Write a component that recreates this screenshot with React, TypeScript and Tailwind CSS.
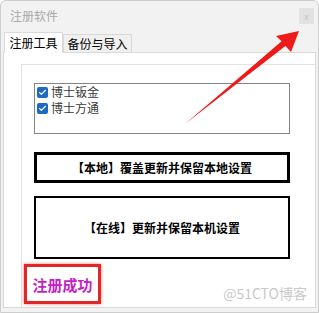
import { Check } from 'lucide-react';

const items = ['博士钣金', '博士方通'];

export default function App() {
  return (
    <div
      className="relative w-[319px] h-[313px] overflow-hidden bg-[#f2f2f2] border border-[#cdcdcd] rounded-t-[6px]"
      style={{ fontFamily: '"Noto Sans CJK SC", "Noto Sans", sans-serif' }}
    >
      {/* Title bar */}
      <div className="h-[30px] flex items-center justify-between pl-[9px] pr-[4px]">
        <span className="text-[12px] text-[#a9a9a9] leading-none">注册软件</span>
        <div className="w-[15px] h-[16px] bg-[#e2e2e2] flex items-center justify-center text-[9px] leading-none text-[#c4c4c4]">
          x
        </div>
      </div>

      {/* Tabs */}
      <div className="h-[21px] flex items-end pl-[3px]">
        <div className="w-[59px] h-[21px] bg-white border border-b-0 border-[#d9d9d9] flex items-center justify-center text-[12px] text-black leading-none relative z-10 -mb-px">
          注册工具
        </div>
        <div className="w-[69px] h-[18px] bg-[#f0f0f0] border border-b-0 border-[#d9d9d9] flex items-center justify-center text-[12px] text-black leading-none">
          备份与导入
        </div>
      </div>

      {/* Panel */}
      <div className="h-[256px] mx-[2px] bg-white border border-[#d9d9d9] pt-[11px] pl-[17px]">
        <div className="h-full border-l border-t border-[#e3e3e3] pl-[12px] pt-[18px]">
          <div className="w-[256px] h-[51px] border border-[#848484] pt-[1px] pl-[2px] flex flex-col gap-[2px]">
            {items.map((name) => (
              <div key={name} className="h-[14px] flex items-center gap-[3px]">
                <div className="w-[11px] h-[11px] rounded-[2px] bg-[#1d6ac4] flex items-center justify-center">
                  <Check className="w-[9px] h-[9px] text-white" strokeWidth={3} />
                </div>
                <span className="text-[12px] text-[#3a3a3a] leading-none">{name}</span>
              </div>
            ))}
          </div>

          <div className="mt-[18px] w-[256px] h-[31px] border-[3px] border-black flex items-center justify-center text-[12px] font-bold text-black leading-none">
            【本地】覆盖更新并保留本地设置
          </div>

          <div className="mt-[13px] w-[256px] h-[63px] border-2 border-black flex items-center justify-center text-[12px] font-bold text-black leading-none">
            【在线】更新并保留本机设置
          </div>

          <div className="mt-[5px] -ml-[10px] w-[77px] h-[40px] border-[3px] border-[#e32626] shadow-[0_0_3px_rgba(227,38,38,0.6)] flex items-center justify-center text-[15px] font-bold text-[#c41fc4] leading-none">
            注册成功
          </div>
        </div>
      </div>

      {/* Watermark */}
      <span className="absolute right-[11px] bottom-[12px] text-[14px] text-[#c9c9c9] leading-none">
        @51CTO博客
      </span>

      {/* Red arrow */}
      <svg className="absolute left-0 top-0" width="319" height="313" viewBox="0 0 319 313">
        <polygon points="184,123 280.6,40.3 275,35 298,30 290,51 284.4,44.9" fill="#ee1a1a" />
      </svg>
    </div>
  );
}
